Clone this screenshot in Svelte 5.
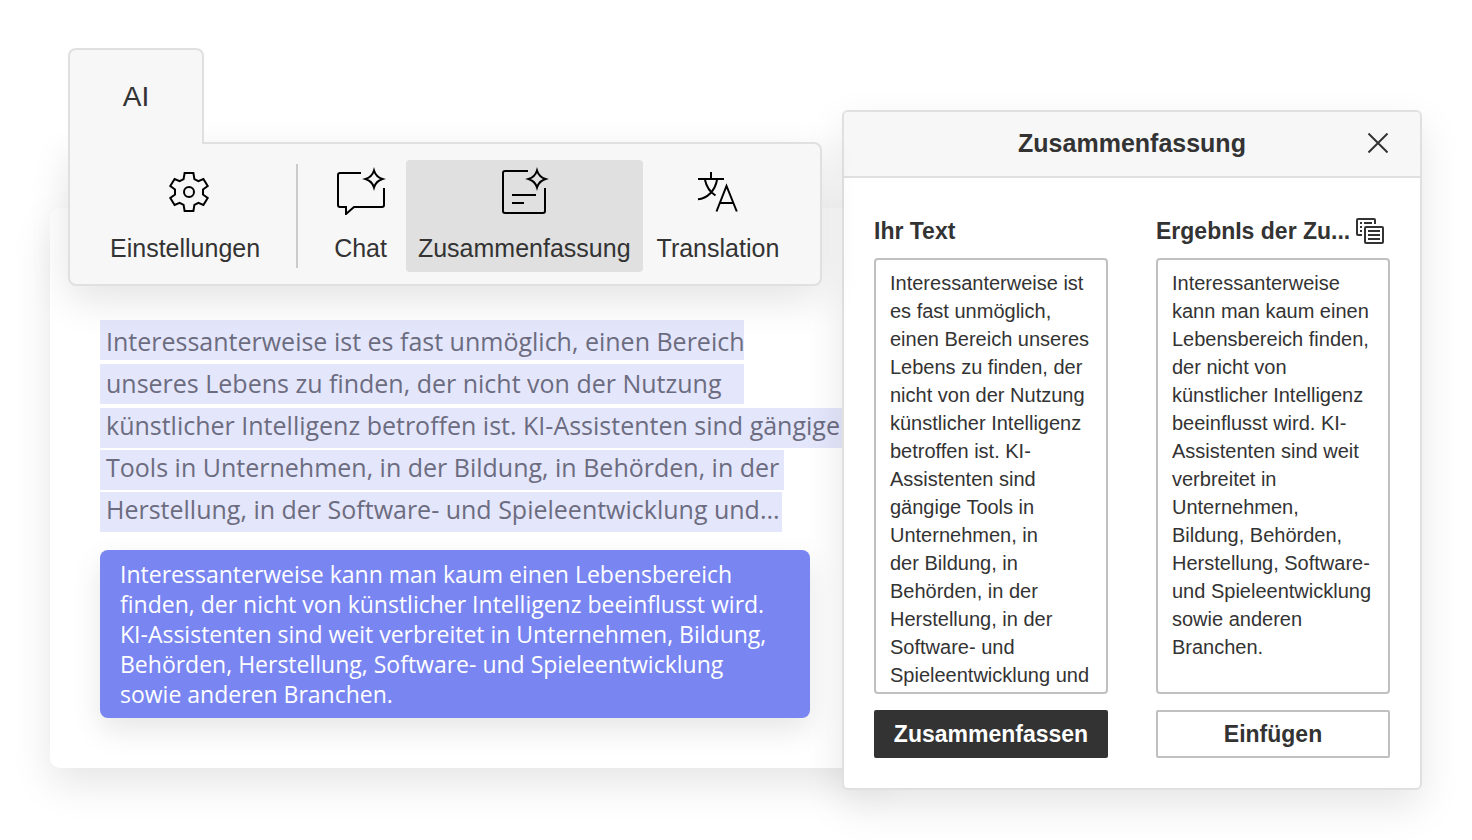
<script>
  const selected = [
    { text: 'Interessanterweise ist es fast unmöglich, einen Bereich', width: 644 },
    { text: 'unseres Lebens zu finden, der nicht von der Nutzung', width: 644 },
    { text: 'künstlicher Intelligenz betroffen ist. KI-Assistenten sind gängige', width: 746 },
    { text: 'Tools in Unternehmen, in der Bildung, in Behörden, in der', width: 684 },
    { text: 'Herstellung, in der Software- und Spieleentwicklung und...', width: 682 }
  ];

  const summary = [
    'Interessanterweise kann man kaum einen Lebensbereich',
    'finden, der nicht von künstlicher Intelligenz beeinflusst wird.',
    'KI-Assistenten sind weit verbreitet in Unternehmen, Bildung,',
    'Behörden, Herstellung, Software- und Spieleentwicklung',
    'sowie anderen Branchen.'
  ];

  let source = $state(
    [
      'Interessanterweise ist',
      'es fast unmöglich,',
      'einen Bereich unseres',
      'Lebens zu finden, der',
      'nicht von der Nutzung',
      'künstlicher Intelligenz',
      'betroffen ist. KI-',
      'Assistenten sind',
      'gängige Tools in',
      'Unternehmen, in',
      'der Bildung, in',
      'Behörden, in der',
      'Herstellung, in der',
      'Software- und',
      'Spieleentwicklung und'
    ].join('\n')
  );

  let result = $state(
    [
      'Interessanterweise',
      'kann man kaum einen',
      'Lebensbereich finden,',
      'der nicht von',
      'künstlicher Intelligenz',
      'beeinflusst wird. KI-',
      'Assistenten sind weit',
      'verbreitet in',
      'Unternehmen,',
      'Bildung, Behörden,',
      'Herstellung, Software-',
      'und Spieleentwicklung',
      'sowie anderen',
      'Branchen.'
    ].join('\n')
  );
</script>

<main class="scene">
  <div class="editor">
    <div class="ribbon">
      <button class="tab" type="button">AI</button>
      <div class="tools">
        <button class="tool settings" type="button">
          <svg width="50" height="48" viewBox="0 0 50 48" aria-hidden="true">
            <g transform="translate(29 25)">
              <path d="M-4.4 -19H4.4L5.4 -12.9L9.4 -10.8L14.4 -13L18.7 -6L14 -2.6V2.6L18.7 6L14.4 13L9.4 10.8L5.4 12.9L4.4 19H-4.4L-5.4 12.9L-9.4 10.8L-14.4 13L-18.7 6L-14 2.6V-2.6L-18.7 -6L-14.4 -13L-9.4 -10.8L-5.4 -12.9Z" />
              <circle r="5" />
            </g>
          </svg>
          Einstellungen
        </button>
        <span class="divider"></span>
        <button class="tool" type="button">
          <svg width="50" height="48" viewBox="0 0 50 48" aria-hidden="true">
            <path d="M25 6H4a2 2 0 0 0-2 2V38a2 2 0 0 0 2 2H10V47L18 40H46a2 2 0 0 0 2-2V21" />
            <path d="M38 3.500Q40 10 46.500 12Q40 14 38 20.500Q36 14 29.500 12Q36 10 38 3.500Z" />
          </svg>
          Chat
        </button>
        <button class="tool active" type="button">
          <svg width="50" height="48" viewBox="0 0 50 48" aria-hidden="true">
            <path d="M29 4H6a2 2 0 0 0-2 2V44a2 2 0 0 0 2 2H44a2 2 0 0 0 2-2V21M13 28H37M13 36H25" />
            <path d="M38 3.500Q40 10 46.500 12Q40 14 38 20.500Q36 14 29.500 12Q36 10 38 3.500Z" />
          </svg>
          Zusammenfassung
        </button>
        <button class="tool translate" type="button">
          <svg width="50" height="48" viewBox="0 0 50 48" aria-hidden="true">
            <path d="M18 5V12M5 12H31M12 13C13.500 20 17 25 22.500 28.500M24 13C22 24 14 31.500 5 32.300M23.500 44.500L33.500 19L43.800 44.500M27 36H40.500" />
          </svg>
          Translation
        </button>
      </div>
    </div>

    <article class="page">
      <div class="selection">
        <div class="bars">
          {#each selected as line}
            <span style="width: {line.width}px"></span>
          {/each}
        </div>
        <p>
          {#each selected as line}{line.text}<br />{/each}
        </p>
      </div>
      <p class="summary">
        {#each summary as line}{line}<br />{/each}
      </p>
    </article>
  </div>

  <section class="dialog" aria-labelledby="dialog-title">
    <header>
      <h2 id="dialog-title">Zusammenfassung</h2>
      <button class="close" type="button" aria-label="Schließen">
        <svg width="20" height="20" viewBox="0 0 20 20" aria-hidden="true">
          <path d="M0.500 0.500L19.500 19.500M19.500 0.500L0.500 19.500" />
        </svg>
      </button>
    </header>
    <div class="columns">
      <div class="column">
        <div class="caption"><label for="source">Ihr Text</label></div>
        <textarea id="source" spellcheck="false" bind:value={source}></textarea>
        <button class="action primary" type="button">Zusammenfassen</button>
      </div>
      <div class="column">
        <div class="caption">
          <label for="result">ErgebnIs der Zu...</label>
          <button class="copy" type="button" aria-label="Kopieren">
            <svg width="28" height="26" viewBox="0 0 28 26" aria-hidden="true">
              <path d="M6 17H2a1 1 0 0 1-1-1V2a1 1 0 0 1 1-1H18a1 1 0 0 1 1 1V6M4 5H6M8 5H16M4 9H6M4 13H6" />
              <rect x="9" y="9" width="18" height="16" rx="1" />
              <path d="M12 13H24M12 17H24M12 21H24" />
            </svg>
          </button>
        </div>
        <textarea id="result" spellcheck="false" bind:value={result}></textarea>
        <button class="action" type="button">Einfügen</button>
      </div>
    </div>
  </section>
</main>

<style>
  :global(body) {
    margin: 0;
    background: #fff;
  }

  .scene {
    box-sizing: border-box;
    display: grid;
    grid-template-columns: minmax(0, 1fr) 580px;
    align-items: start;
    padding: 48px 50px 50px;
    overflow: hidden;
    color: #333;
    font-family: "Liberation Sans", Arial, sans-serif;
  }

  .scene * {
    box-sizing: border-box;
  }

  button {
    margin: 0;
    padding: 0;
    border: 0;
    background: none;
    color: inherit;
    font: inherit;
    cursor: pointer;
  }

  svg {
    display: block;
    fill: none;
    stroke: #000;
    stroke-width: 2;
  }

  .ribbon {
    position: relative;
    z-index: 3;
    margin: 0 20px 0 18px;
  }

  .tab {
    position: relative;
    z-index: 1;
    display: block;
    width: 136px;
    height: 96px;
    border: 2px solid #e0e0e0;
    border-bottom: 0;
    border-radius: 8px 8px 0 0;
    background: #f7f7f7;
    font-size: 28px;
    line-height: 32px;
  }

  .tools {
    display: flex;
    align-items: center;
    margin-top: -2px;
    padding: 16px 28px 12px;
    border: 2px solid #e0e0e0;
    border-radius: 0 8px 8px 8px;
    background: #f7f7f7;
    box-shadow: 0 14px 40px rgba(0, 0, 0, 0.11);
  }

  .tool {
    display: flex;
    flex-direction: column;
    align-items: center;
    gap: 19px;
    padding: 7px 12px 10px;
    border-radius: 4px;
    font-size: 25px;
    line-height: 28px;
    white-space: nowrap;
  }

  .tool.active {
    margin-left: 7px;
    background: #e0e0e0;
  }

  .tool.translate {
    margin-left: 2px;
  }

  .divider {
    width: 2px;
    height: 104px;
    margin: 0 24px;
    background: #cbcbcb;
  }

  .page {
    position: relative;
    z-index: 1;
    margin: -78px -40px 0 0;
    padding: 112px 50px 50px;
    border-radius: 10px;
    background: #fff;
    box-shadow: 0 16px 40px rgba(0, 0, 0, 0.1);
    font-family: "Open Sans", sans-serif;
  }

  .page p {
    margin: 0;
    white-space: nowrap;
  }

  .selection {
    display: grid;
  }

  .selection > * {
    grid-area: 1 / 1;
  }

  .bars {
    display: flex;
    flex-direction: column;
    gap: 2px;
  }

  .bars span {
    height: 40px;
    background: #e4e6fb;
  }

  .bars span:nth-child(-n + 2) {
    margin-bottom: 2px;
  }

  .selection p {
    padding-left: 6px;
    color: #6c6c80;
    font-size: 25px;
    line-height: 42px;
  }

  .page .summary {
    max-width: 710px;
    margin-top: 18px;
    padding: 9px 20px;
    border-radius: 8px;
    background: #7986f2;
    box-shadow: 0 12px 30px rgba(0, 0, 0, 0.1);
    color: #fff;
    font-size: 23px;
    line-height: 30px;
  }

  .dialog {
    position: relative;
    z-index: 2;
    margin-top: 62px;
    border: 2px solid #e0e0e0;
    border-radius: 6px;
    background: #fff;
    box-shadow: 0 16px 40px rgba(0, 0, 0, 0.1);
  }

  header {
    display: grid;
    grid-template-columns: 20px 1fr 20px;
    align-items: center;
    padding: 15px 32px 17px;
    border-bottom: 2px solid #e0e0e0;
    border-radius: 4px 4px 0 0;
    background: #f7f7f7;
  }

  h2 {
    grid-column: 2;
    margin: 0;
    font-size: 25px;
    line-height: 32px;
    text-align: center;
  }

  .close svg,
  .copy svg {
    stroke: #333;
  }

  .columns {
    display: grid;
    grid-template-columns: 1fr 1fr;
    gap: 48px;
    padding: 38px 30px 30px;
  }

  .column {
    display: flex;
    flex-direction: column;
    min-width: 0;
  }

  .caption {
    display: flex;
    align-items: center;
    gap: 6px;
    margin-bottom: 12px;
    font-size: 23px;
    font-weight: bold;
    line-height: 30px;
    white-space: nowrap;
  }

  textarea {
    height: 436px;
    margin: 0 0 16px;
    padding: 9px 14px;
    overflow: hidden;
    border: 2px solid #c0c0c0;
    border-radius: 4px;
    outline: 0;
    background: #fff;
    color: #333;
    font: 20px/28px "Liberation Sans", Arial, sans-serif;
    resize: none;
    white-space: pre;
  }

  .action {
    height: 48px;
    border: 2px solid #c0c0c0;
    border-radius: 2px;
    background: #fff;
    font-size: 23px;
    font-weight: bold;
  }

  .action.primary {
    border-color: #333;
    background: #333;
    color: #fff;
  }
</style>
